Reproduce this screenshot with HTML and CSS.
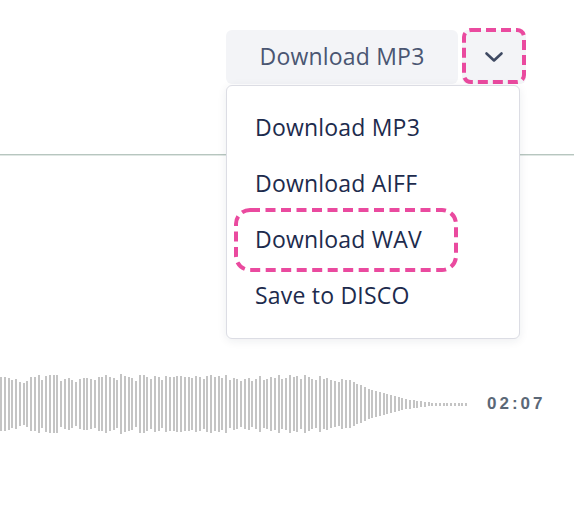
FILE: index.html
```
<!DOCTYPE html>
<html lang="en">
  <head>
    <meta charset="UTF-8" />
    <meta name="viewport" content="width=device-width, initial-scale=1.0" />
    <title>Track download</title>
    <link rel="stylesheet" href="styles.css">
  </head>
  <body>
    <!-- Toolbar with split download button -->
    <header class="toolbar">
      <div class="split">
        <button class="btn-main">Download MP3</button>
        <button class="btn-toggle">
          <svg class="chevron" width="20" height="12" viewBox="0 0 20 12">
            <path d="M2.5 2.5 L10 9.5 L17.5 2.5" fill="none" stroke="#3f4a63" stroke-width="2.6" stroke-linecap="round" stroke-linejoin="round" />
          </svg>
          <svg class="mark" width="64" height="56" viewBox="0 0 64 56">
            <rect x="2" y="2" width="60" height="52" rx="7" fill="none" stroke="#ea4a9f" stroke-width="4" stroke-dasharray="10 5" />
          </svg>
        </button>

        <div class="menu">
          <div class="menu-item">Download MP3</div>
          <div class="menu-item">Download AIFF</div>
          <div class="menu-item marked">
            Download WAV
            <svg class="mark" width="224" height="64" viewBox="0 0 224 64">
              <rect x="2" y="2" width="220" height="60" rx="14" fill="none" stroke="#ea4a9f" stroke-width="4" stroke-dasharray="10 5.5" />
            </svg>
          </div>
          <div class="menu-item">Save to DISCO</div>
        </div>
      </div>
    </header>

    <div class="rule"></div>

    <div class="track">
      <div class="wave" id="wave"></div>
      <span class="time">02:07</span>
    </div>

    <script>
      var heights = [
        54, 54, 52, 48, 50, 44, 42, 46, 54, 54, 58, 48, 56, 58, 58, 58, 46, 50, 52, 48,
        44, 50, 52, 52, 50, 48, 54, 54, 58, 54, 52, 48, 60, 56, 54, 52, 46, 58, 58, 54,
        50, 56, 54, 48, 56, 54, 54, 56, 56, 54, 54, 52, 56, 54, 50, 56, 58, 54, 56, 52,
        58, 48, 52, 50, 46, 50, 52, 46, 50, 56, 48, 50, 54, 52, 58, 50, 52, 58, 54, 56,
        50, 58, 54, 50, 48, 56, 50, 52, 48, 46, 44, 50, 48,
        48, 44, 40, 38, 34, 30, 28, 26, 24, 22, 20, 18, 16, 14, 12, 10, 9, 8, 7, 6, 5, 4,
        3, 3, 3, 3, 3, 3, 3, 3, 3, 3
      ];

      var wave = document.getElementById("wave");
      heights.forEach(function (h) {
        var bar = document.createElement("span");
        bar.className = "bar";
        bar.style.height = h + "px";
        wave.appendChild(bar);
      });
    </script>
  </body>
</html>
```

FILE: styles.css
```
/* Global Styles */
* {
  margin: 0;
  padding: 0;
  box-sizing: border-box;
}

body {
  background: #ffffff;
  font-family: "Open Sans", "Noto Sans", sans-serif;
  color: #1d2b4d;
  width: 574px;
  height: 517px;
  overflow: hidden;
}

.toolbar {
  display: flex;
  justify-content: flex-end;
  padding: 30px 48px 0 0;
}

.split {
  position: relative;
  display: flex;
  gap: 4px;
}

button {
  border: none;
  font-family: inherit;
  cursor: pointer;
}

.btn-main {
  width: 232px;
  height: 54px;
  padding-bottom: 2px;
  background: #f3f4f7;
  border-radius: 6px;
  color: #4a5672;
  font-size: 23px;
  font-weight: 400;
  letter-spacing: 0.2px;
}

.btn-toggle {
  position: relative;
  width: 64px;
  height: 54px;
  background: #f3f4f7;
  border-radius: 6px;
  display: flex;
  align-items: center;
  justify-content: center;
}

.btn-toggle .mark {
  position: absolute;
  left: 0;
  top: -2px;
}

.menu {
  position: absolute;
  left: 0;
  top: 55px;
  width: 294px;
  padding: 13px 0 15px;
  background: #ffffff;
  border: 1px solid #dcdde4;
  border-radius: 6px;
  box-shadow: 0 2px 10px rgba(30, 40, 70, 0.08);
  z-index: 2;
}

.menu-item {
  position: relative;
  height: 56px;
  display: flex;
  align-items: center;
  padding-left: 28px;
  font-size: 23px;
  letter-spacing: 0.2px;
  color: #1d2b4d;
}

.menu-item .mark {
  position: absolute;
  left: 7px;
  top: -3px;
}

.rule {
  margin-top: 70px;
  height: 2px;
  border-top: 1px solid #b7c6bf;
  border-bottom: 1px solid #e0e7e4;
}

.track {
  margin-top: 218px;
  height: 60px;
  display: flex;
  align-items: center;
}

.wave {
  width: 467px;
  height: 60px;
  display: flex;
  align-items: center;
  justify-content: space-between;
}

.bar {
  width: 2px;
  background: #c4c4c4;
}

.time {
  margin-left: 20px;
  font-family: "Liberation Sans", sans-serif;
  font-size: 17px;
  font-weight: 700;
  letter-spacing: 3px;
  color: #5b6877;
}
```
